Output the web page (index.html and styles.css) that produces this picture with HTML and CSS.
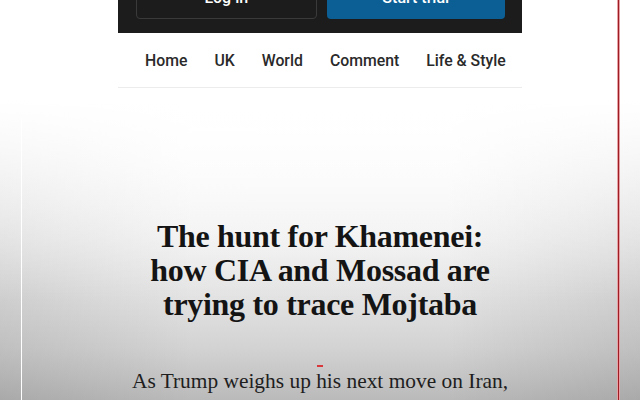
FILE: index.html
```html
<!DOCTYPE html>
<html lang="en">
<head>
<meta charset="utf-8">
<title>The hunt for Khamenei</title>
<link rel="stylesheet" href="styles.css">
</head>
<body>
<div class="page">
  <header class="topbar">
    <a class="btn btn-outline" href="#">Log in</a>
    <a class="btn btn-primary" href="#">Start trial</a>
  </header>
  <nav class="nav">
    <a href="#">Home</a>
    <a href="#">UK</a>
    <a href="#">World</a>
    <a href="#">Comment</a>
    <a href="#">Life &amp; Style</a>
  </nav>
  <article class="article">
    <h1 class="headline">The hunt for Khamenei:<br>how CIA and Mossad are<br>trying to trace Mojtaba</h1>
    <p class="standfirst">As Trump weighs up his next move on Iran,</p>
  </article>
</div>
<span class="mark"></span>
<span class="edge edge-left"></span>
<span class="edge edge-right"></span>
</body>
</html>
```
FILE: styles.css
```css
html, body {
  margin: 0;
  padding: 0;
  height: 400px;
  overflow: hidden;
}
body {
  position: relative;
  background:
    linear-gradient(to bottom, #ffffff 100px, rgba(255, 255, 255, 0) 300px),
    linear-gradient(to right, rgba(0, 0, 0, 0.09), rgba(0, 0, 0, 0) 30%, rgba(0, 0, 0, 0) 70%, rgba(0, 0, 0, 0.09)),
    linear-gradient(to bottom, #ffffff 100px, #f7f7f7 170px, #ededed 240px, #e2e2e2 300px, #d2d2d2 350px, #bababa 400px);
  font-family: "Liberation Serif", "Times New Roman", serif;
  color: #1a1a1a;
}
.page {
  width: 404px;
  margin: 0 auto;
}
.topbar {
  background: #1c1c1c;
  display: flex;
  gap: 10px;
  padding: 0 17px 14px 18px;
  margin-top: -25px;
}
.btn {
  flex: 1;
  height: 44px;
  display: flex;
  align-items: center;
  justify-content: center;
  border-radius: 4px;
  font-family: Roboto, "Liberation Sans", sans-serif;
  font-weight: 500;
  font-size: 16px;
  color: #ffffff;
  text-decoration: none;
  box-sizing: border-box;
}
.btn-outline {
  border: 1px solid #3a3a3a;
}
.btn-primary {
  background: #0b5f95;
}
.nav {
  height: 54px;
  display: flex;
  align-items: center;
  gap: 27px;
  padding-left: 27px;
  border-bottom: 1px solid #ececec;
}
.nav a {
  font-family: Roboto, "Liberation Sans", sans-serif;
  font-weight: 500;
  font-size: 15.8px;
  color: #2a2a2a;
  text-decoration: none;
  white-space: nowrap;
}
.article {
  text-align: center;
  padding-top: 131px;
}
.headline {
  margin: 0;
  font-size: 32px;
  line-height: 34px;
  font-weight: 700;
  color: #141414;
  letter-spacing: -0.3px;
}
.standfirst {
  margin: 45px 0 0;
  font-size: 21.4px;
  line-height: 30px;
  color: #1e1e1e;
  white-space: nowrap;
}
.mark {
  position: absolute;
  left: 317px;
  top: 365px;
  width: 6px;
  height: 2px;
  background: #d8383c;
}
.edge {
  position: absolute;
  width: 1px;
}
.edge-left {
  left: 21px;
  top: 118px;
  bottom: 0;
  background: #ffffff;
}
.edge-right {
  left: 618px;
  top: 0;
  bottom: 0;
  background: #9e1c24;
  box-shadow: -1px 0 0 #e7a0a4, 1px 0 0 #e7a0a4;
}
```
